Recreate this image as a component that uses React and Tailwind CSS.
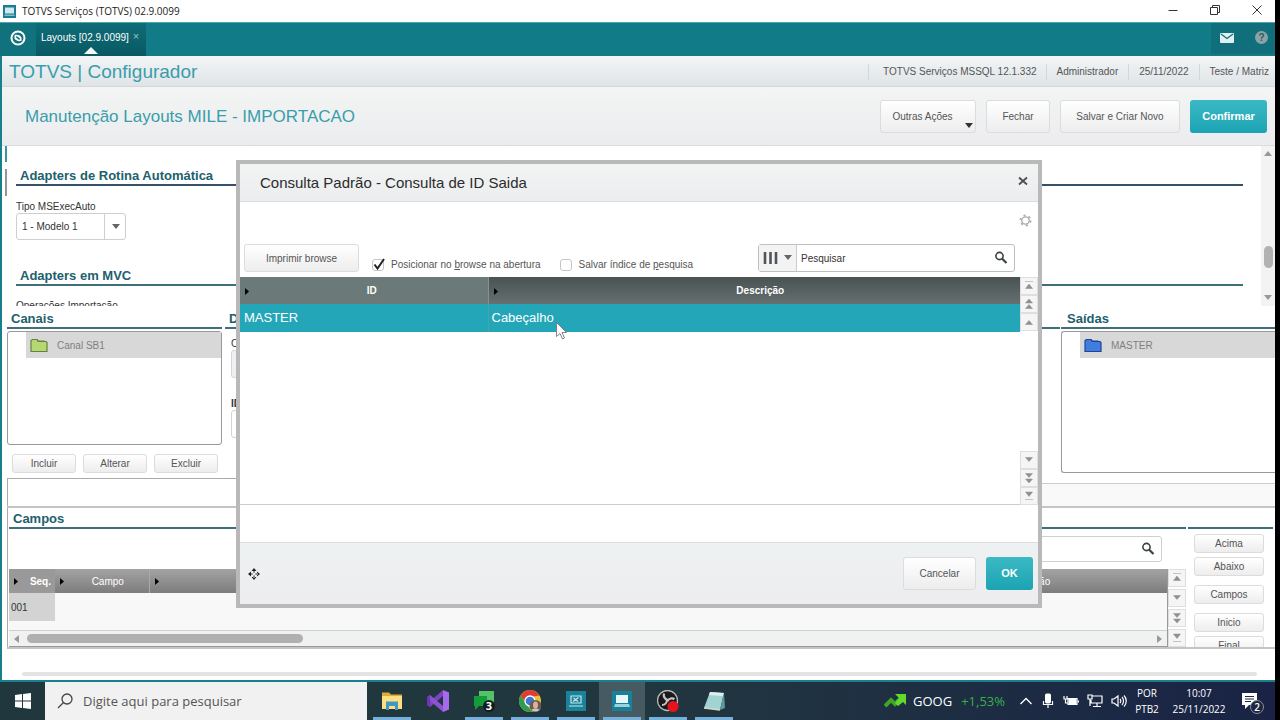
import { useState } from 'react'

const flatButton = 'flex items-center justify-center rounded-[3px] border border-[#dcdcdc] bg-gradient-to-b from-white to-[#ededee] text-[#555]'
const tealButton = 'flex items-center justify-center rounded-[3px] bg-gradient-to-b from-[#3ab9c4] to-[#1ba3b3] font-bold text-white text-[11px]'

function Tri({ dir = 'down', className = '' }) {
  const d = {
    down: 'M0 1H8L4 6Z',
    up: 'M0 6H8L4 1Z',
    left: 'M6 0V8L1 4Z',
    right: 'M2 0V8L7 4Z',
  }[dir]
  return <svg viewBox="0 0 8 8" className={`h-2 w-2 fill-current ${className}`}><path d={d} /></svg>
}

// small marker at the left of every column header
function ColumnMark() {
  return <svg viewBox="0 0 8 8" className="h-2 w-2"><path d="M3 1v7l4-3.500z" fill="#000" /></svg>
}

function Magnifier() {
  return (
    <svg viewBox="0 0 14 14" className="h-[14px] w-[14px]" fill="none" stroke="#3b4245">
      <circle cx="5.500" cy="5" r="3.600" strokeWidth="1.600" />
      <path d="M8 7.500l4.500 4.500" strokeWidth="2.200" />
    </svg>
  )
}

function Folder({ fill, dark }) {
  return (
    <svg viewBox="0 0 20 16" className="h-4 w-5">
      <path d="M2 14.500V3.500l1.500-1H8l1.500 2H17l1 1v9z" fill={fill} stroke={dark} strokeWidth="1.200" />
      <path d="M3.500 2.500H8l1 1.500h6.500" fill="none" stroke={dark} strokeWidth="1.200" />
    </svg>
  )
}

function ScrollGlyph({ kind }) {
  const paths = {
    top: 'M4 3.500h8M8 6L4.500 10.500h7z',
    pageUp: 'M8 3L4.500 7h7zM8 8.500L4.500 12.500h7z',
    up: 'M8 6.500L4.500 10.500h7z',
    down: 'M8 9.500L4.500 5.500h7z',
    pageDown: 'M8 7.500L4.500 3.500h7zM8 13L4.500 9h7z',
    bottom: 'M8 8.500L4.500 4h7zM4 11.500h8',
  }
  return (
    <button aria-label={kind} className="flex h-[18px] w-full items-center justify-center border border-[#dedede] bg-[#f5f5f6]">
      <svg viewBox="0 0 16 16" className="h-4 w-4" fill="#8f9091" stroke="#8f9091" strokeWidth="0.500"><path d={paths[kind]} /></svg>
    </button>
  )
}

function TitleBar() {
  return (
    <div className="flex h-[22px] items-center justify-between bg-white pl-[3px]">
      <div className="flex items-center gap-[6px]">
        <svg viewBox="0 0 13 13" className="h-[13px] w-[13px]">
          <rect width="13" height="13" fill="#1b7d91" />
          <rect x="2" y="2.500" width="9" height="6" fill="#cfe9ee" />
          <rect x="1.500" y="9.500" width="10" height="1.500" fill="#85bfca" />
        </svg>
        <span className="font-['Open_Sans',sans-serif] text-[10px] text-[#222]">TOTVS Serviços (TOTVS) 02.9.0099</span>
      </div>
      <div className="flex gap-[30px] pr-3 pb-[2px]">
        <button aria-label="Minimizar"><svg viewBox="0 0 12 12" className="h-3 w-3" fill="none" stroke="#333"><path d="M1.500 6.500h9" /></svg></button>
        <button aria-label="Restaurar"><svg viewBox="0 0 12 12" className="h-3 w-3" fill="none" stroke="#333"><path d="M1.500 3.500h7v7h-7zM3.500 3.500v-2h7v7h-2" /></svg></button>
        <button aria-label="Fechar janela"><svg viewBox="0 0 12 12" className="h-3 w-3" fill="none" stroke="#333"><path d="M1.500 1.500l9 9M10.500 1.500l-9 9" /></svg></button>
      </div>
    </div>
  )
}

function TabBar() {
  return (
    <div className="flex h-[34px] items-stretch justify-between border-t border-[#4fa5ad] bg-[#117b87] text-white">
      <div className="flex">
        <button aria-label="Início" className="flex w-9 items-center justify-center bg-[#0f727d] pb-1">
          <svg viewBox="0 0 16 16" className="h-4 w-4" fill="none" stroke="#fff">
            <circle cx="8" cy="8" r="6.500" strokeWidth="2" />
            <path d="M4.500 5.200c3-1 6 .2 7 2.500v3.100c-3 1-6-.2-7-2.500z" fill="#fff" stroke="none" />
            <path d="M6.300 6.700l3.400 2.600" stroke="#0f727d" strokeWidth="1.600" />
          </svg>
        </button>
        <div className="relative flex w-[110px] items-center gap-1 bg-gradient-to-b from-[#0f6c77] to-[#085963] pb-1 pl-[5px]">
          <span className="text-[10px]">Layouts [02.9.0099]</span>
          <button aria-label="Fechar aba" className="pb-[2px] text-[11px] text-[#9cc6cb]">×</button>
          <svg viewBox="0 0 14 7" className="absolute bottom-[2px] left-12 h-[7px] w-[14px]"><path d="M0 7L7 0l7 7z" fill="#f3f8f8" /></svg>
        </div>
      </div>
      <div className="mb-[2px] flex w-16 items-center justify-between bg-[#106f7a] pr-[7px] pb-[2px] pl-[9px]">
        <button aria-label="Mensagens">
          <svg viewBox="0 0 14 10" className="h-[10px] w-[14px]"><rect width="14" height="10" rx="1" fill="#e0f0f2" /><path d="M1 1l6 4.500L13 1" fill="none" stroke="#106f7a" strokeWidth="1.200" /></svg>
        </button>
        <button className="flex h-[13px] w-[13px] items-center justify-center rounded-full bg-[#8ba3a8] text-[10px] font-bold text-[#2c5b63]">?</button>
      </div>
    </div>
  )
}

function SectionTitle({ children, className = '' }) {
  return <h2 className={`h-5 border-b-2 border-[#3f6f7a] pl-1 text-[13px] leading-[19px] font-bold text-[#21606e] ${className}`}>{children}</h2>
}

function Adapters() {
  return (
    <section className="flex h-[160px] justify-between overflow-hidden bg-white">
      <div className="flex w-[14px] shrink-0 flex-col justify-start gap-[7px] pl-[3px]">
        <span className="h-4 w-[2px] bg-[#3a98a3]" />
        <span className="h-[27px] w-[2px] bg-[#8d979c]" />
      </div>
      <div className="min-w-0 flex-1 pt-5 pr-[18px]">
        <h2 className="h-5 border-b-2 border-[#34506b] pl-1 text-[13px] leading-[19px] font-bold text-[#21606e]">Adapters de Rotina Automática</h2>
        <label htmlFor="tipo" className="mt-[14px] block text-[10px] leading-[13px] text-[#333]">Tipo MSExecAuto</label>
        <div className="relative w-[110px]">
          <select id="tipo" className="h-[27px] w-full appearance-none rounded-[3px] border border-[#cfcfcf] bg-white pl-[5px] text-[10px] text-[#333]">
            <option>1 - Modelo 1</option>
          </select>
          <span className="pointer-events-none absolute inset-y-0 right-0 flex w-[22px] items-center justify-center border-l border-[#cfcfcf] text-[#666]"><Tri /></span>
        </div>
        <SectionTitle className="mt-[26px]">Adapters em MVC</SectionTitle>
        <div className="mt-[14px] text-[10px] leading-3 text-[#333]">Operações Importação</div>
      </div>
      <div className="flex w-[14px] flex-col items-center justify-between bg-[#f3f3f3] py-1 text-[#999]">
        <Tri dir="up" />
        <div className="mt-[88px] h-[22px] w-[9px] rounded-full bg-[#b2b2b2]" />
        <Tri className="mt-auto" />
      </div>
    </section>
  )
}

function TreeItem({ label, fill, dark }) {
  return (
    <button className="ml-[18px] flex h-[26px] w-[calc(100%-18px)] items-center gap-2 bg-[#d8d8d8] pl-[3px] text-[10px] text-[#808080]">
      <Folder fill={fill} dark={dark} />
      <span>{label}</span>
    </button>
  )
}

function Canais() {
  return (
    <section className="flex h-[172px] gap-[3px] bg-white pt-[3px] pl-[5px]">
      <div className="w-[215px] shrink-0">
        <SectionTitle>Canais</SectionTitle>
        <div className="mt-[2px] h-[114px] rounded-[3px] border border-[#999]">
          <TreeItem label="Canal SB1" fill="#b5d873" dark="#66803f" />
        </div>
        <div className="mt-[9px] flex gap-[7px] pl-[5px]">
          {['Incluir', 'Alterar', 'Excluir'].map(b => (
            <button key={b} className={`${flatButton} h-[19px] w-[64px] text-[10px]`}>{b}</button>
          ))}
        </div>
      </div>
      <div className="min-w-0 flex-1">
        <SectionTitle>Dados</SectionTitle>
        <div className="pl-[6px] text-[10px] text-[#333]">
          <label htmlFor="codigo" className="mt-[9px] block leading-3">Canal</label>
          <input id="codigo" className="h-7 w-40 rounded-[3px] border border-[#d5d5d5] bg-[#eef0f3]" />
          <label htmlFor="saida" className="mt-5 block leading-3 font-bold">ID</label>
          <input id="saida" className="h-7 w-40 rounded-[3px] border border-[#d5d5d5] bg-white" />
        </div>
      </div>
      <div className="-ml-[2px] w-[214px] shrink-0">
        <SectionTitle className="pl-[6px]">Saídas</SectionTitle>
        <div className="mt-[2px] h-[142px] rounded-l-[3px] border border-r-0 border-[#999]">
          <TreeItem label="MASTER" fill="#3f7ee0" dark="#1f4494" />
        </div>
      </div>
    </section>
  )
}

function Campos() {
  return (
    <section className="flex h-[143px] border-t-2 border-b-2 border-[#c4c4c4] bg-white">
      <div className="flex min-w-0 flex-1 flex-col border-l border-[#aaa] pl-[1px]">
        <SectionTitle className="mt-px">Campos</SectionTitle>
        <div className="mt-[7px] mr-6 flex h-[27px] w-[400px] items-center self-end rounded-[3px] border border-[#d0d0d0] pr-[6px]">
          <input aria-label="Pesquisar campos" className="min-w-0 flex-1" />
          <button aria-label="Buscar campos"><Magnifier /></button>
        </div>
        <div className="mt-[7px] flex flex-1">
          <div className="flex min-w-0 flex-1 flex-col border-r border-b border-[#999] bg-[#f8f8f8]">
            <table className="w-full table-fixed text-[10px]">
              <thead>
                <tr className="h-6 bg-gradient-to-b from-[#a3a3a3] to-[#7d7d7d] text-white">
                  <th className="w-[46px] bg-[#999]"><span className="flex items-center justify-between pr-1 pl-[2px]"><ColumnMark />Seq.</span></th>
                  <th className="w-[94px] border-r border-[#aaa]"><span className="flex items-center px-[2px] font-normal"><ColumnMark /><span className="flex-1 pl-1">Campo</span></span></th>
                  <th><span className="flex px-[2px]"><ColumnMark /></span></th>
                  <th className="w-[278px] font-normal">Descrição</th>
                </tr>
              </thead>
              <tbody>
                <tr className="h-7 text-[#333]">
                  <td className="bg-[#d3d3d3] pl-[2px]">001</td>
                  <td /><td /><td />
                </tr>
              </tbody>
            </table>
            <div className="mt-auto flex h-4 items-center justify-between border-t border-[#d0d0d0] bg-[#f0f1f1] px-1 text-[#999]">
              <Tri dir="left" />
              <div className="mr-auto ml-[6px] h-[9px] w-[276px] rounded-full bg-[#b0b0b0]" />
              <Tri dir="right" />
            </div>
          </div>
          <div className="flex w-[18px] flex-col gap-[2px]">
            <ScrollGlyph kind="top" />
            <ScrollGlyph kind="down" />
            <ScrollGlyph kind="pageDown" />
            <ScrollGlyph kind="bottom" />
          </div>
        </div>
      </div>
      <div className="ml-[2px] w-[87px] overflow-hidden">
        <div className="mt-px mr-[2px] h-5 border-b-2 border-[#3f6f7a]" />
        <div className="flex flex-col gap-[4px] pt-[5px] pl-[6px] text-[10px] text-[#555]">
          <button className={`${flatButton} h-[19px] w-[70px]`}>Acima</button>
          <button className={`${flatButton} h-[19px] w-[70px]`}>Abaixo</button>
          <button className={`${flatButton} mt-[5px] h-[19px] w-[70px]`}>Campos</button>
          <button className={`${flatButton} mt-[5px] h-[19px] w-[70px]`}>Inicio</button>
          <button className={`${flatButton} h-[19px] w-[70px]`}>Final</button>
        </div>
      </div>
    </section>
  )
}

function ConsultaDialog() {
  const [posicionar, setPosicionar] = useState(true)
  const [salvar, setSalvar] = useState(false)

  return (
    <div role="dialog" aria-label="Consulta Padrão" className="w-[806px] border-4 border-[#b9b9b9] bg-white">
      <div className="flex h-[38px] items-center justify-between border-b border-[#dcdcdc] bg-gradient-to-b from-[#f2f4f4] to-[#ebedee] pr-[10px] pl-5">
        <h1 className="pt-[2px] text-[15px] text-[#2c2c2c]">Consulta Padrão - Consulta de ID Saida</h1>
        <button aria-label="Fechar consulta" className="pb-1">
          <svg viewBox="0 0 10 10" className="h-[10px] w-[10px]" stroke="#4a4f52" strokeWidth="1.800"><path d="M1 1.500l8 7M9 1.500l-8 7" /></svg>
        </button>
      </div>
      <div className="flex h-[42px] items-center justify-end pr-[6px] pb-[6px]">
        <button aria-label="Configurar">
          <svg viewBox="0 0 14 14" className="h-[13px] w-[13px]" fill="none" stroke="#aaa">
            <circle cx="7" cy="7" r="4" strokeWidth="1.400" />
            <circle cx="7" cy="7" r="5.500" strokeWidth="1.800" strokeDasharray="2.300 3.460" />
          </svg>
        </button>
      </div>
      <div className="flex h-[33px] items-start pl-1 text-[10px] text-[#555]">
        <button className={`${flatButton} h-7 w-[115px]`}>Imprimir browse</button>
        <label className="mt-[13px] ml-[13px] flex items-center gap-[7px]">
          <span className="relative flex h-3 w-3">
            <input type="checkbox" checked={posicionar} onChange={e => setPosicionar(e.target.checked)} className="h-3 w-3 appearance-none rounded-[3px] border border-[#c5c5c5] bg-white" />
            {posicionar && <svg viewBox="0 0 12 12" className="pointer-events-none absolute bottom-px left-px h-3 w-3" fill="none" stroke="#222" strokeWidth="2"><path d="M1.500 6.500l3 4L11 1" /></svg>}
          </span>
          <span>Posicionar no <u>b</u>rowse na abertura</span>
        </label>
        <label className="mt-[13px] ml-[19px] flex items-center gap-[7px]">
          <input type="checkbox" checked={salvar} onChange={e => setSalvar(e.target.checked)} className="h-3 w-3 appearance-none rounded-[3px] border border-[#c5c5c5] bg-white" />
          <span>Salvar índice de <u>p</u>esquisa</span>
        </label>
        <div className="mr-[23px] ml-auto flex h-7 w-[257px] items-center rounded-[3px] border border-[#bfbfbf] pr-[6px]">
          <button aria-label="Colunas" className="flex h-full w-[38px] items-center justify-center gap-[6px] border-r border-[#ccc] bg-[#f3f3f4] text-[#666]">
            <svg viewBox="0 0 15 12" className="h-3 w-[15px]" stroke="#50555c" strokeWidth="2.600"><path d="M2 0v12M7.500 0v12M13 0v12" /></svg>
            <Tri />
          </button>
          <input aria-label="Pesquisar" defaultValue="Pesquisar" className="min-w-0 flex-1 pl-1 text-[#333] outline-none" />
          <button aria-label="Buscar"><Magnifier /></button>
        </div>
      </div>
      <div className="flex h-[228px]">
        <div className="min-w-0 flex-1 border-b border-[#ccc]">
          <table className="w-full table-fixed">
            <thead>
              <tr className="h-[27px] bg-gradient-to-b from-[#4a5252] to-[#657070] text-[10px] text-white">
                <th className="w-[248px] border-r border-[#89918f] bg-[#6b7a78]"><span className="flex items-center px-[2px]"><ColumnMark /><span className="flex-1 pl-2">ID</span></span></th>
                <th><span className="flex items-center px-[2px]"><ColumnMark /><span className="flex-1 pl-1">Descrição</span></span></th>
              </tr>
            </thead>
            <tbody>
              <tr className="h-7 bg-[#23a6b7] text-[13px] text-white">
                <td className="border-r border-[#50a0aa] pl-1">MASTER</td>
                <td className="relative pl-[3px]">
                  Cabeçalho
                  <svg viewBox="0 0 11 18" className="absolute top-[18px] left-[67px] h-[18px] w-[11px]"><path d="M.5.500v14l3.500-3 2.500 5.500 2-1L6 10.500h4.500z" fill="#fff" stroke="#777" strokeWidth="0.900" /></svg>
                </td>
              </tr>
            </tbody>
          </table>
        </div>
        <div className="flex w-[18px] flex-col justify-between">
          <div>
            <ScrollGlyph kind="top" />
            <ScrollGlyph kind="pageUp" />
            <ScrollGlyph kind="up" />
          </div>
          <div>
            <ScrollGlyph kind="down" />
            <ScrollGlyph kind="pageDown" />
            <ScrollGlyph kind="bottom" />
          </div>
        </div>
      </div>
      <div className="mt-[37px] flex h-[62px] items-center justify-between border-t border-[#dcdcdc] bg-gradient-to-b from-[#eef1f1] to-[#ededf0] pr-[5px] pl-2">
        <svg viewBox="0 0 12 12" className="h-3 w-3" fill="#222"><path d="M6 0l2.500 3h-5zM6 12l2.500-3h-5zM0 6l3-2.500v5zM12 6L9 3.500v5zM5.500 2h1v8h-1zM2 5.500h8v1H2z" /><circle cx="6" cy="6" r="1.500" fill="#eee" /></svg>
        <div className="flex gap-[10px]">
          <button className={`${flatButton} h-[33px] w-[73px] text-[10px]`}>Cancelar</button>
          <button className={`${tealButton} h-[33px] w-[47px]`}>OK</button>
        </div>
      </div>
    </div>
  )
}

const apps = [
  { name: 'Explorador', open: true, icon: <><path d="M1 2.500h7l2 2h11v13H1z" fill="#e0ab35" /><path d="M1 6h20v13H1z" fill="#fbdf83" /><path d="M5 20v-8.500h12V20h-3v-4H8v4z" fill="#3f97c2" /></> },
  { name: 'Visual Studio', open: false, icon: <><path d="M16 0l6 2.500v17L16 22V0z" fill="#a66bea" /><path d="M16 0v6L3 17l-3-2V14L16 0z" fill="#7d43c2" /><path d="M0 7l3-2 13 11v6L0 8z" fill="#8c52d0" /><path d="M0 7l3-1v11l-3-2z" fill="#6c36ae" /></> },
  { name: 'Mensagens', open: true, icon: <><path d="M6 1h15v13H6z" fill="#55c267" /><path d="M1 6h13v10H6l-4 4v-4H1z" fill="#139c37" /><circle cx="16" cy="16" r="6" fill="#111c20" /><text x="16" y="20" textAnchor="middle" fontSize="11" fontWeight="bold" fill="#fff">3</text></> },
  { name: 'Chrome', open: true, icon: <><circle cx="11" cy="11" r="11" fill="#e8c33a" /><path d="M1.500 5.500A11 11 0 0 1 20.500 5.500L11 7l-4 6z" fill="#db3f35" /><path d="M1.500 5.500L8 15l5 6.800A11 11 0 0 1 1.500 5.500z" fill="#2f9c50" /><circle cx="11" cy="11" r="5" fill="#3c78d8" stroke="#fff" strokeWidth="1.300" /><circle cx="16.500" cy="16" r="6" fill="#6b5a50" /><ellipse cx="16.500" cy="15" rx="2.500" ry="3.500" fill="#d9b39c" /><path d="M12.500 20c1-2 7-2 8 0a6 6 0 0 1-8 0z" fill="#c8c8c8" /></> },
  { name: 'TOTVS', open: true, icon: <><rect x="1" y="1" width="20" height="20" fill="#19839a" /><path d="M6 6h10v7H6zM4 16h14M8 11.500l5.500-4M8.500 8l4.500 3.500" fill="none" stroke="#c9e7ec" strokeWidth="1.200" /></> },
  { name: 'SmartClient', open: true, active: true, icon: <><rect x="1" y="1" width="20" height="20" fill="#17809a" /><rect x="5" y="5" width="12" height="8" fill="#e8f6f8" /><path d="M4 14h14l1 3H3z" fill="#9dd0da" /></> },
  { name: 'OBS', open: true, icon: <><circle cx="10.500" cy="10.500" r="10" fill="#1a1a1c" stroke="#b9b9b9" strokeWidth="1.300" /><path d="M7 3.500a5 5 0 0 0 4 6.500M17.500 9a5 5 0 0 0-7 2M5 15a5 5 0 0 0 5-5" fill="none" stroke="#c7c7c7" strokeWidth="2.200" /><circle cx="16" cy="16.500" r="5.500" fill="#e5131b" /></> },
  { name: 'Bloco de notas', open: true, icon: <><path d="M7 2l14 1-4 17L1 18z" fill="#9fd3d4" /><path d="M7 2l14 1-1 3-14-1z" fill="#e3ecec" /><path d="M21 3l1 15-5 2z" fill="#5e999c" /><path d="M1 18l16 2" stroke="#d8d8c8" strokeWidth="1.500" /></> },
]

function Taskbar() {
  return (
    <footer className="mt-auto flex h-[38px] items-stretch bg-gradient-to-r from-[#20373d] via-[#21373f] to-[#1a2345] font-['Open_Sans',sans-serif] text-white">
      <button aria-label="Iniciar" className="flex w-[45px] items-center justify-center">
        <svg viewBox="0 0 16 16" className="h-4 w-4" fill="#fff"><path d="M0 2l7-1v6.500H0zM8 1l8-1v7.500H8zM0 8.500h7V15l-7-1zM8 8.500h8V16l-8-1z" /></svg>
      </button>
      <div className="flex w-[322px] items-center gap-[10px] bg-[#f1f1f1] pl-3">
        <svg viewBox="0 0 16 16" className="h-4 w-4" fill="none" stroke="#444" strokeWidth="1.300"><circle cx="10" cy="6" r="5" /><path d="M6.500 9.500L1 15" /></svg>
        <input aria-label="Pesquisa" placeholder="Digite aqui para pesquisar" className="min-w-0 flex-1 pt-[2px] text-[13px] placeholder:text-[#555]" />
      </div>
      <nav className="flex pl-[2px]">
        {apps.map(a => (
          <button key={a.name} aria-label={a.name} className={`relative flex w-[46px] items-center justify-center ${a.active ? 'bg-[#465a61]' : ''}`}>
            <svg viewBox="0 0 22 22" className="h-[22px] w-[22px]">{a.icon}</svg>
            {a.open && <span className="absolute inset-x-1 bottom-0 h-[3px] bg-[#76b1de]" />}
          </button>
        ))}
      </nav>
      <div className="ml-auto flex items-center pr-[11px] text-[12px]">
        <svg viewBox="0 0 22 14" className="h-[14px] w-[22px]"><path d="M1 12l6-6 4 4 6-6" fill="none" stroke="#3fa522" strokeWidth="4" /><path d="M11 0h11v11l-3-3-5 4-3-3 4-5z" fill="#63d92b" /></svg>
        <span className="ml-[7px] pt-[2px] text-[13px]">GOOG</span>
        <span className="ml-[9px] pt-[2px] text-[13px] text-[#36b04a]">+1,53%</span>
        <div className="ml-[14px] flex items-center gap-2">
          <svg viewBox="0 0 14 14" className="h-[14px] w-[14px]" fill="none" stroke="#fff" strokeWidth="1.300"><path d="M1.500 10L7 4.500l5.500 5.500" /></svg>
          <svg viewBox="0 0 14 16" className="h-4 w-[14px]" fill="none" stroke="#fff"><rect x="4.500" y="1" width="5" height="9" rx="1" fill="#fff" /><path d="M2.500 8v3.500h9V8M7 11.500V15" strokeWidth="1.200" /></svg>
          <svg viewBox="0 0 16 12" className="h-3 w-4" fill="none" stroke="#fff"><path d="M5 3.500h9v6H5zM15.500 5.500v2M1 1v3h3V1M2.500 4v4H5" strokeWidth="1.200" /><path d="M6 4h7v5H6z" fill="#fff" /></svg>
          <svg viewBox="0 0 16 14" className="h-[14px] w-4" fill="none" stroke="#fff" strokeWidth="1.200"><path d="M5 2h10v7H4V6M10 9v3M6 12.500h8M1 1h4v4H1zM3 5v7" /></svg>
          <svg viewBox="0 0 16 14" className="h-[14px] w-4" fill="none" stroke="#fff" strokeWidth="1.200"><path d="M1 5h2l4-3v10L3 9H1zM9 5c1 1 1 3 0 4M11 3c2 2 2 6 0 8M13 1.500c3 3 3 8 0 11" /></svg>
        </div>
        <div className="ml-1 w-8 text-center text-[10px] leading-4">POR<br />PTB2</div>
        <div className="ml-[6px] w-[60px] text-center text-[10px] leading-4">10:07<br />25/11/2022</div>
        <div className="relative ml-[13px] pt-1">
          <svg viewBox="0 0 22 22" className="h-[22px] w-[22px]"><path d="M0 1h15v12H7l-4 4v-4H0z" fill="#fff" /><path d="M3 4.500h9M3 7h9M3 9.500h6" stroke="#1b2645" /></svg>
          <span className="absolute right-0 bottom-0 flex h-[14px] w-[14px] items-center justify-center rounded-full border border-[#8a90a0] bg-[#1c2640] text-[10px] leading-none font-semibold">2</span>
        </div>
      </div>
    </footer>
  )
}

export default function App() {
  return (
    <div className="relative flex min-h-screen flex-col bg-black pr-[5px] font-['Liberation_Sans',Arial,sans-serif]">
      <TitleBar />
      <TabBar />
      <main className="flex flex-1 flex-col border-b-2 border-l-2 border-[#17808b] bg-white">
        <header className="flex h-[31px] items-center justify-between border-b border-[#d3d7d9] bg-gradient-to-b from-[#f3f5f6] to-[#dfe4e7] pt-[2px] pl-[7px]">
          <span className="text-[19px] leading-6 text-[#3a9dab]">TOTVS | Configurador</span>
          <div className="flex divide-x divide-[#d2d7d9] border-l border-[#d2d7d9] text-[10px] leading-4 text-[#555]">
            <span className="pr-[9px] pl-[14px]">TOTVS Serviços MSSQL 12.1.332</span>
            <span className="px-[10px]">Administrador</span>
            <span className="px-[10px]">25/11/2022</span>
            <span className="pr-[6px] pl-[10px]">Teste / Matriz</span>
          </div>
        </header>
        <div className="flex h-[59px] items-center justify-between border-b border-[#dadcdd] bg-gradient-to-b from-[#f2f5f4] to-[#ececee] pr-2 pl-[23px]">
          <h1 className="pt-[2px] text-[17px] text-[#3a9dab]">Manutenção Layouts MILE - IMPORTACAO</h1>
          <div className="flex gap-[10px] pt-px text-[10px]">
            <button className={`${flatButton} relative h-[33px] w-[96px] pr-[11px]`}>Outras Ações<Tri className="absolute right-[2px] bottom-[2px] text-[#333]" /></button>
            <button className={`${flatButton} h-[33px] w-[64px]`}>Fechar</button>
            <button className={`${flatButton} h-[33px] w-[120px]`}>Salvar e Criar Novo</button>
            <button className={`${tealButton} h-[33px] w-[77px]`}>Confirmar</button>
          </div>
        </div>
        <Adapters />
        <Canais />
        <div className="ml-[5px] flex h-7 items-end">
          <div className="h-full flex-1 border-t border-l border-[#aaa]" />
          <div className="h-[23px] flex-1 border-t border-[#ccc] bg-[#f9f9f9]" />
        </div>
        <div className="pl-[5px]"><Campos /></div>
        <div className="mt-[23px] mr-[18px] ml-5 h-1 rounded-full bg-[#e3e3e3]" />
      </main>
      <Taskbar />
      <div className="absolute inset-x-0 top-[160px] flex justify-center pr-[2px]">
        <ConsultaDialog />
      </div>
    </div>
  )
}
